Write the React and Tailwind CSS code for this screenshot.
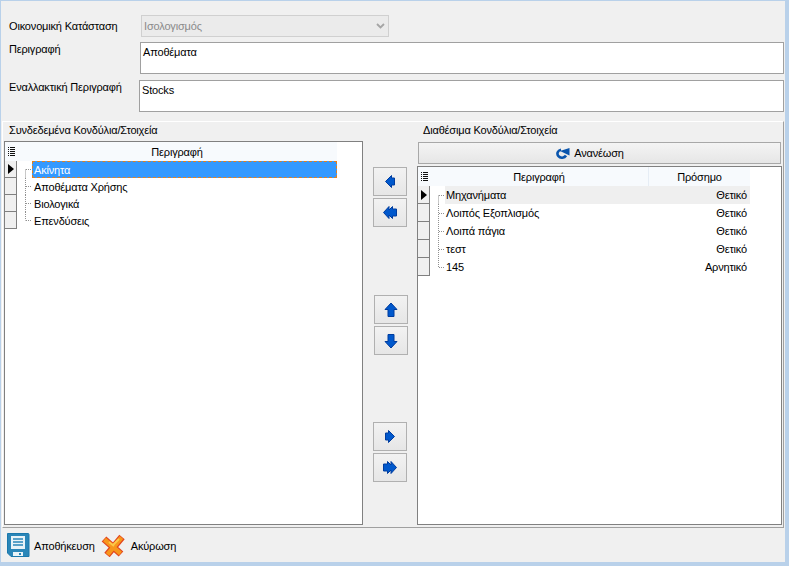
function Arrow({ d }) {
  return (
    <svg width="16" height="16" viewBox="0 0 16 16">
      <path d={d} fill="#0058cc" stroke="#003c9e" strokeWidth="1" strokeLinejoin="miter" />
    </svg>
  );
}

function ArrowButton({ d, mt = "" }) {
  return (
    <div className={`flex h-[29px] w-[34px] items-center justify-center border border-[#b0b0b0] bg-gradient-to-b from-[#f2f2f2] to-[#e6e6e6] ${mt}`}>
      <Arrow d={d} />
    </div>
  );
}

const LEFT = "M9.5 1.5 L3.5 7.5 L9.5 13.5 V11 H12.5 V4 H9.5 Z";
const LEFT2 = "M7 1.5 L1.5 7.5 L7 13.5 V10 L10.5 13.5 V11 H14.5 V4 H10.5 V1.5 L7 5 Z";
const RIGHT = "M6.5 1.5 L12.5 7.5 L6.5 13.5 V11 H3.5 V4 H6.5 Z";
const RIGHT2 = "M9 1.5 L14.5 7.5 L9 13.5 V10 L5.5 13.5 V11 H1.5 V4 H5.5 V1.5 L9 5 Z";
const UP = "M8 1 L14 7.5 H11 V14.5 H5 V7.5 H2 Z";
const DOWN = "M8 15 L14 8.5 H11 V1.5 H5 V8.5 H2 Z";

function ListIcon() {
  return (
    <svg width="7" height="10" viewBox="0 0 7 10">
      <path d="M0 .5h1M2 .5h5M0 2.5h1M2 2.5h5M0 4.5h1M2 4.5h5M0 6.5h1M2 6.5h5M0 8.5h1M2 8.5h5" stroke="#111" strokeWidth="1" />
    </svg>
  );
}

function Indicator({ active, h }) {
  return (
    <div className={`flex w-[12px] shrink-0 items-center justify-center border-r border-b border-[#808080] bg-[#f0f0f0] ${h}`}>
      {active && (
        <svg width="6" height="10" viewBox="0 0 6 10">
          <path d="M0 0 L6 5 L0 10 Z" fill="#000" />
        </svg>
      )}
    </div>
  );
}

function Tree({ rowH, first, last, w }) {
  const mid = Math.floor(rowH / 2) + 0.5;
  const y1 = first ? mid : 0;
  const y2 = last ? mid : rowH;
  return (
    <svg width={w} height={rowH} className="shrink-0" viewBox={`0 0 ${w} ${rowH}`}>
      <path
        d={`M8.5 ${y1} V${y2} M9 ${mid} H${w}`}
        stroke="#909090"
        strokeWidth="1"
        strokeDasharray="1 1"
        fill="none"
      />
    </svg>
  );
}

function Save() {
  return (
    <svg width="23" height="24" viewBox="0 0 23 24">
      <path d="M.5 .5 H21 Q22 .5 22 1.5 V23.5 H4 L.5 20 Z" fill="#2a86b8" stroke="#1a78ac" />
      <rect x="4" y="3" width="14" height="13" fill="#e8f3f8" />
      <path d="M6 6h10M6 9h10M6 12h10" stroke="#2a86b8" strokeWidth="1.4" />
      <rect x="6" y="19" width="10" height="4" fill="#e8f3f8" />
      <rect x="12" y="20" width="2" height="2" fill="#2a86b8" />
    </svg>
  );
}

function Cancel() {
  return (
    <svg width="24" height="23" viewBox="0 0 24 23">
      <path d="M3 5 L20 20 M21 3 L6 21" stroke="#e2451e" strokeWidth="7" fill="none" />
      <path d="M3.5 5.5 L19.5 19.5 M20.5 3.5 L6.5 20.5" stroke="#f7961c" strokeWidth="4.4" fill="none" />
      <path d="M8 8 L13 12 M18 5 L12 11" stroke="#fcc848" strokeWidth="2" fill="none" />
    </svg>
  );
}

function Refresh() {
  return (
    <svg width="15" height="11" viewBox="0 0 15 11">
      <path d="M11 7.5 A4.5 4 0 1 1 6 1.8" fill="none" stroke="#0a55ad" strokeWidth="2.6" />
      <path d="M5 3 L14.5 0 V7.5 Z" fill="#0a55ad" />
    </svg>
  );
}

const leftRows = ["Ακίνητα", "Αποθέματα Χρήσης", "Βιολογικά", "Επενδύσεις"];
const rightRows = [
  ["Μηχανήματα", "Θετικό"],
  ["Λοιπός Εξοπλισμός", "Θετικό"],
  ["Λοιπά πάγια", "Θετικό"],
  ["τεστ", "Θετικό"],
  ["145", "Αρνητικό"],
];

export default function App() {
  return (
    <div className="h-[566px] w-[789px] overflow-hidden bg-[#b9d1ea] pt-[1px] pr-[4px] pb-[4px] pl-[1px] text-[11px] leading-[13px] tracking-[-0.17px] text-black [font-family:'Liberation_Sans',sans-serif]">
      <div className="flex h-full flex-col bg-[#f0f0f0]">
        {/* form */}
        <div className="h-[120px] shrink-0 pr-[1px]">
          <div className="mt-[14px] flex h-[22px] items-center pl-[8px]">
            <div className="w-[132px]">Οικονομική Κατάσταση</div>
            <div className="flex h-[22px] w-[248px] items-center justify-between border border-[#d0d0d0] bg-[#ebebeb] pl-[2px] pr-[3px] text-[#8a8a8a]">
              <span>Ισολογισμός</span>
              <svg width="9" height="6" viewBox="0 0 9 6">
                <path d="M1 1 L4.5 4.5 L8 1" fill="none" stroke="#a5a5a5" strokeWidth="1.8" />
              </svg>
            </div>
          </div>
          <div className="mt-[5px] flex h-[32px] pl-[8px]">
            <div className="w-[131px] pt-[1px]">Περιγραφή</div>
            <div className="flex-1 border border-[#a0a0a0] bg-white pl-[2px] pt-[3px]">Αποθέματα</div>
          </div>
          <div className="mt-[6px] flex h-[32px] pl-[8px]">
            <div className="w-[130px] pt-[1px]">Εναλλακτική Περιγραφή</div>
            <div className="flex-1 border border-[#a0a0a0] bg-white pl-[2px] pt-[3px]">Stocks</div>
          </div>
        </div>

        {/* group */}
        <div className="mr-[1px] ml-[1px] flex flex-1 border border-t-white border-r-[#a0a0a0] border-b-[#a0a0a0] border-l-white">
          <div className="flex w-[360px] shrink-0 flex-col pb-[2px] pl-[1px]">
            <div className="h-[19px] pl-[5px] pt-[2px]">Συνδεδεμένα Κονδύλια/Στοιχεία</div>
            <div className="flex-1 border border-[#808080] bg-white">
              <div className="flex h-[19px] items-stretch">
                <div className="flex w-[12px] shrink-0 items-center justify-center bg-[#f7fafd]"><ListIcon /></div>
                <div className="flex w-[320px] items-center justify-center bg-[#f7fafd] pt-[1px]">Περιγραφή</div>
              </div>
              {leftRows.map((t, i) => (
                <div key={t} className="flex h-[17px]">
                  <Indicator active={i === 0} h="h-[17px]" />
                  <Tree rowH={17} first={i === 0} last={i === leftRows.length - 1} w={15} />
                  <div
                    className={`flex h-[17px] w-[305px] items-center pt-[1px] ${
                      i === 0 ? "border border-dashed border-[#e08020] bg-[#3399ff] pl-[1px] text-white" : "pl-[2px]"
                    }`}
                  >
                    {t}
                  </div>
                </div>
              ))}
            </div>
          </div>

          <div className="flex w-[54px] shrink-0 flex-col pl-[10px]">
            <div className="mt-[45px]"><ArrowButton d={LEFT} /></div>
            <ArrowButton d={LEFT2} mt="mt-[2px]" />
            <div className="mt-[68px] pl-[1px]"><ArrowButton d={UP} /></div>
            <div className="pl-[1px]"><ArrowButton d={DOWN} mt="mt-[2px]" /></div>
            <div className="mt-[67px]"><ArrowButton d={RIGHT} /></div>
            <ArrowButton d={RIGHT2} mt="mt-[2px]" />
          </div>

          <div className="flex flex-1 flex-col pr-[1px] pb-[2px]">
            <div className="h-[20px] pl-[6px] pt-[2px]">Διαθέσιμα Κονδύλια/Στοιχεία</div>
            <div className="mx-[1px] flex h-[22px] items-center justify-center gap-[4px] border border-[#a8a8a8] bg-gradient-to-b from-[#f4f4f4] to-[#e6e6e6] pr-[20px]">
              <Refresh />
              <span>Ανανέωση</span>
            </div>
            <div className="mt-[2px] flex-1 border border-[#808080] bg-white">
              <div className="flex h-[19px]">
                <div className="flex w-[12px] shrink-0 items-center justify-center bg-[#f7fafd]"><ListIcon /></div>
                <div className="flex w-[219px] items-center justify-center border-r border-[#e6edf5] bg-[#f7fafd] pt-[1px]">Περιγραφή</div>
                <div className="flex w-[101px] items-center justify-center bg-[#f7fafd] pt-[1px]">Πρόσημο</div>
              </div>
              {rightRows.map(([a, b], i) => (
                <div key={a} className="flex h-[18px]">
                  <Indicator active={i === 0} h="h-[18px]" />
                  <Tree rowH={18} first={i === 0} last={i === rightRows.length - 1} w={15} />
                  <div className={`flex w-[305px] items-center justify-between pl-[1px] pr-[3px] ${i === 0 ? "bg-[#efefef]" : ""}`}>
                    <span>{a}</span>
                    <span>{b}</span>
                  </div>
                </div>
              ))}
            </div>
          </div>
        </div>

        {/* footer */}
        <div className="flex h-[34px] shrink-0 items-center pl-[6px]">
          <Save />
          <span className="ml-[4px] mt-[2px]">Αποθήκευση</span>
          <div className="ml-[6px]"><Cancel /></div>
          <span className="ml-[6px] mt-[2px]">Ακύρωση</span>
        </div>
      </div>
    </div>
  );
}
